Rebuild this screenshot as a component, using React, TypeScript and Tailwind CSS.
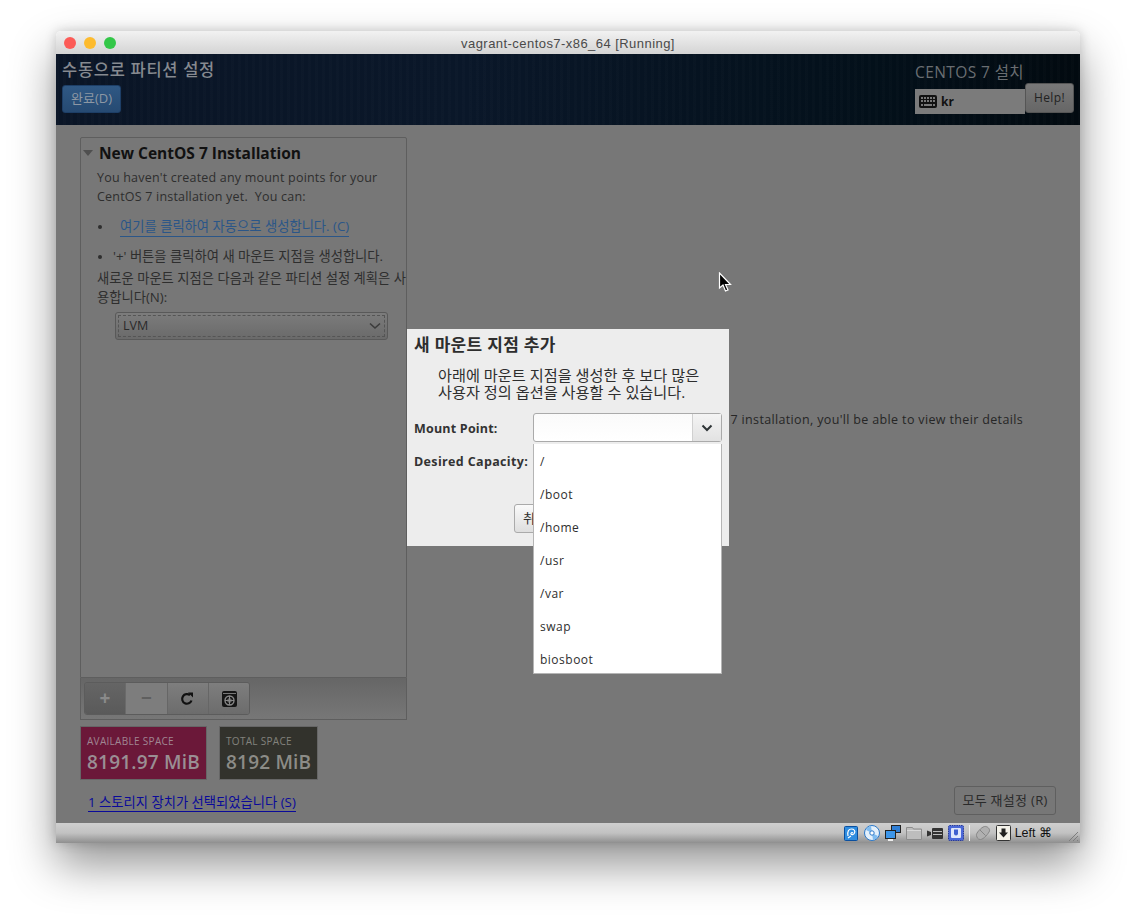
function Dot({ className }: { className: string }) {
  return <span className={`block h-3 w-3 rounded-full ${className}`} />;
}

function KeyboardIcon() {
  return (
    <svg width="18" height="13" viewBox="0 0 18 13">
      <rect x="0" y="0" width="18" height="13" rx="2" fill="#111" />
      <g fill="#777">
        <rect x="2" y="2" width="2" height="2" />
        <rect x="5" y="2" width="2" height="2" />
        <rect x="8" y="2" width="2" height="2" />
        <rect x="11" y="2" width="2" height="2" />
        <rect x="14" y="2" width="2" height="2" />
        <rect x="2" y="5" width="2" height="2" />
        <rect x="5" y="5" width="2" height="2" />
        <rect x="8" y="5" width="2" height="2" />
        <rect x="11" y="5" width="2" height="2" />
        <rect x="14" y="5" width="2" height="2" />
        <rect x="2" y="9" width="2" height="2" />
        <rect x="5" y="9" width="8" height="2" />
        <rect x="14" y="9" width="2" height="2" />
      </g>
    </svg>
  );
}

function StatusIcons() {
  return (
    <div className="flex items-center">
      {/* hard disk */}
      <svg width="14" height="15" viewBox="0 0 14 15" className="mr-[6px]">
        <rect x="0.500" y="0.500" width="13" height="14" rx="1" fill="#2f8de0" stroke="#0b4f9e" />
        <path d="M4 10c-1-5 1-7 3.500-7s4 2 3 4-3 2-3.500 1 1-2 2-1M4 12l3-2" fill="none" stroke="#fff" strokeWidth="1.200" />
      </svg>
      {/* optical disk */}
      <svg width="16" height="16" viewBox="0 0 16 16" className="mr-[5px]">
        <circle cx="8" cy="8" r="7.500" fill="#e4f0fb" stroke="#2b78c9" />
        <path d="M8 8 2 5a7 7 0 0 1 5-4zM8 8l6 3a7 7 0 0 1-5 4z" fill="#7fbcf0" />
        <circle cx="8" cy="8" r="2.200" fill="#fff" stroke="#2b78c9" />
      </svg>
      {/* network */}
      <svg width="16" height="16" viewBox="0 0 16 16" className="mr-[5px]">
        <rect x="6.500" y="0.500" width="9" height="7" fill="#2f7fd6" stroke="#222" />
        <rect x="0.500" y="5.500" width="10" height="8" fill="#3d96ea" stroke="#222" />
        <rect x="3" y="14" width="5" height="2" fill="#eee" />
      </svg>
      {/* shared folder */}
      <svg width="16" height="14" viewBox="0 0 16 14" className="mr-[5px]">
        <path d="M.5 13.500V1.500h6l1 1.500h8v10.500z" fill="#bdbdbd" stroke="#8d8d8d" />
        <path d="M1 4.500h14" stroke="#d8d8d8" />
      </svg>
      {/* capture */}
      <svg width="16" height="11" viewBox="0 0 16 11" className="mr-[5px]">
        <rect x="5" y="0" width="11" height="11" rx="1" fill="#333" />
        <path d="M6 3.500h9M6 6.500h9" stroke="#bbb" />
        <path d="M0 2.500 4 4v3L0 8.500z" fill="#333" />
      </svg>
      {/* cpu */}
      <svg width="16" height="16" viewBox="0 0 16 16" className="mr-[5px]">
        <rect x="0.500" y="0.500" width="15" height="15" rx="1" fill="#4a68d8" stroke="#26389a" strokeDasharray="1.500 0.800" />
        <rect x="3" y="3" width="10" height="10" rx="1" fill="#dfe6fb" />
        <path d="M6 4.500v4a2 2 0 0 0 4 0v-4z" fill="#3f5fd0" />
      </svg>
      <span className="mr-[5px] h-[16px] w-px bg-[#f2f2f2]" />
      {/* mouse */}
      <svg width="16" height="16" viewBox="0 0 16 16" className="mr-[5px]">
        <path d="M1.500 10.500c-1-2 5-8.500 8-9s5.500 2.500 5 4.500-6 8.500-9 8.500-3.500-2-4-4z" fill="#b0b0b0" stroke="#858585" />
        <path d="M5 5l5.500 5.500" stroke="#858585" />
      </svg>
      {/* host key capture */}
      <svg width="15" height="16" viewBox="0 0 15 16" className="mr-[4px]">
        <rect x="0.500" y="0.500" width="14" height="15" rx="1" fill="#f4f2ea" stroke="#333" />
        <path d="M5.500 3.500h4v4h2.500l-4.500 5-4.500-5h2.500z" fill="#222" />
      </svg>
    </div>
  );
}

export default function App() {
  const mountPoints = ["/", "/boot", "/home", "/usr", "/var", "swap", "biosboot"];

  return (
    <div className="h-[923px] w-[1136px] overflow-hidden bg-white pl-[56px] pt-[31px] font-['Open_Sans','Noto_Sans_CJK_KR',sans-serif]">
      <div className="relative flex h-[812px] w-[1024px] flex-col overflow-hidden rounded-t-[5px] shadow-[0_22px_45px_rgba(0,0,0,0.42),0_0_12px_rgba(0,0,0,0.18)]">
        {/* title bar */}
        <div className="relative flex h-[23px] shrink-0 items-center justify-center bg-gradient-to-b from-[#f2f2f2] to-[#d4d4d4] pt-[2px] font-['Liberation_Sans',sans-serif] text-[13px] tracking-[0.45px] text-[#4a4a4a]">
          <div className="absolute left-[8px] top-[6px] flex gap-2">
            <Dot className="bg-[#fc5b57]" />
            <Dot className="bg-[#fdbb2e]" />
            <Dot className="bg-[#33c748]" />
          </div>
          vagrant-centos7-x86_64 [Running]
        </div>

        {/* installer header */}
        <div className="flex h-[71px] shrink-0 justify-between bg-[repeating-linear-gradient(90deg,rgba(255,255,255,0.012)_0px,rgba(255,255,255,0.012)_3px,transparent_3px,transparent_7px),linear-gradient(90deg,#0a1526_0%,#0a1729_40%,#03101a_80%,#020a10_100%)] pl-[6px] pr-[6px]">
          <div>
            <div className="mt-[5px] text-[16.5px] font-medium leading-[22px] tracking-[0.7px] text-[#868a90]">수동으로 파티션 설정</div>
            <button className="mt-[4px] flex h-[28px] w-[59px] items-center justify-center rounded-[3px] border border-[#1d3e66] bg-gradient-to-b from-[#2f5884] to-[#264a72] text-[13px] text-[#8d98a4]">
              완료(D)
            </button>
          </div>
          <div className="w-[159px]">
            <div className="mt-[8px] text-[15.5px] leading-[20px] tracking-[0.4px] text-[#6a6e72]">CENTOS 7 설치</div>
            <div className="mt-[1px] flex items-start">
              <div className="mt-[6px] flex h-[25px] w-[110px] items-center gap-[4px] bg-[#7b7b7b] pl-[4px] text-[12px] font-bold text-[#111]">
                <KeyboardIcon />
                kr
              </div>
              <button className="h-[30px] w-[49px] rounded-[3px] border border-[#555] bg-gradient-to-b from-[#787878] to-[#666] text-[12px] tracking-[0.4px] text-[#222]">
                Help!
              </button>
            </div>
          </div>
        </div>

        {/* main content */}
        <div className="flex min-h-0 flex-1 bg-[#777777] pl-[24px] pr-[24px]">
          <div className="flex w-[327px] shrink-0 flex-col pt-[12px]">
            <div className="flex h-[541px] flex-col rounded-t-[2px] border border-[#5e5e5e]">
              <div className="mt-[5px] flex items-center pl-[2px]">
                <span className="mr-[6px] h-0 w-0 border-x-[5px] border-t-[6px] border-x-transparent border-t-[#4f4f4f]" />
                <span className="text-[15.5px] font-bold leading-[20px] text-[#111]">New CentOS 7 Installation</span>
              </div>
              <div className="mt-[5px] pl-[16px] text-[12.5px] leading-[19px] tracking-[0.2px] text-[#2e2e2e]">
                <p className="whitespace-pre">You haven't created any mount points for your</p>
                <p className="whitespace-pre">CentOS 7 installation yet.  You can:</p>
              </div>
              <div className="mt-[11px] flex items-center pl-[17px] text-[13.3px] leading-[19px]">
                <span className="mr-[18px] block h-[4px] w-[4px] rounded-full bg-[#2e2e2e]" />
                <span className="border-b border-[#2b5688] text-[#2b5688]">여기를 클릭하여 자동으로 생성합니다. (C)</span>
              </div>
              <div className="mt-[10px] flex items-center pl-[17px] text-[13.3px] leading-[19px] text-[#2e2e2e]">
                <span className="mr-[11px] block h-[4px] w-[4px] rounded-full bg-[#2e2e2e]" />
                <span className="whitespace-nowrap">'+' 버튼을 클릭하여 새 마운트 지점을 생성합니다.</span>
              </div>
              <p className="mt-[3px] whitespace-nowrap pl-[16px] text-[13.3px] leading-[19px] text-[#2e2e2e]">
                새로운 마운트 지점은 다음과 같은 파티션 설정 계획은 사
                <br />
                용합니다(N):
              </p>
              <div className="ml-[34px] mt-[5px] flex h-[28px] w-[273px] items-center justify-between rounded-[3px] border border-[#595959] bg-gradient-to-b from-[#7c7c7c] to-[#6a6a6a] p-[2px]">
                <div className="flex h-full w-full items-center justify-between border border-dashed border-[#555] pl-[4px] pr-[3px] text-[12.5px] text-[#2a2a2a]">
                  LVM
                  <svg width="12" height="8" viewBox="0 0 12 8">
                    <path d="M1 1.500 6 6l5-4.500" fill="none" stroke="#3c3c3c" strokeWidth="1.600" />
                  </svg>
                </div>
              </div>
            </div>

            {/* mount point toolbar */}
            <div className="flex h-[42px] shrink-0 items-start border border-t-0 border-[#5e5e5e] bg-gradient-to-b from-[#666666] to-[#777777] pl-[3px] pt-[4px]">
              <div className="flex h-[33px] overflow-hidden rounded-[3px] border border-[#5c5c5c]">
                <div className="flex w-[40px] items-center justify-center bg-gradient-to-b from-[#656565] to-[#5a5a5a] text-[19px] font-bold leading-none text-[#8a8a8a]">+</div>
                <div className="flex w-[42px] items-center justify-center border-l border-[#6a6a6a] bg-[#7d7d7d] text-[19px] font-bold leading-none text-[#5f5f5f]">−</div>
                <div className="flex w-[41px] items-center justify-center border-l border-[#666] bg-gradient-to-b from-[#7e7e7e] to-[#6c6c6c]">
                  <svg width="14" height="14" viewBox="0 0 14 14" className="-ml-[2px]">
                    <path d="M11.500 8.500A4.800 4.800 0 1 1 10 3.200" fill="none" stroke="#111" strokeWidth="2.200" />
                    <path d="M8 0.500h5v5z" fill="#111" />
                  </svg>
                </div>
                <div className="flex w-[41px] items-center justify-center border-l border-[#666] bg-gradient-to-b from-[#7e7e7e] to-[#6c6c6c]">
                  <svg width="15" height="16" viewBox="0 0 15 16">
                    <rect x="0" y="0" width="15" height="16" rx="2" fill="#151515" />
                    <path d="M1 2.500h13" stroke="#777" />
                    <circle cx="7.500" cy="9.500" r="4.500" fill="none" stroke="#888" strokeWidth="1.400" />
                    <circle cx="7.500" cy="9.500" r="1.800" fill="none" stroke="#888" />
                    <path d="M7.500 5v9M3 9.500h9" stroke="#888" />
                  </svg>
                </div>
              </div>
            </div>

            {/* space tiles */}
            <div className="mt-[6px] flex gap-[12px]">
              <div className="h-[54px] w-[127px] border border-[#666] bg-[#6b1839] pl-[6px] pt-[7px]">
                <div className="text-[10px] leading-[14px] tracking-[0.3px] text-[#a08692]">AVAILABLE SPACE</div>
                <div className="mt-[2px] whitespace-nowrap text-[19px] font-semibold leading-[24px] tracking-[0.2px] text-[#9a8f94]">8191.97 MiB</div>
              </div>
              <div className="h-[54px] w-[99px] border border-[#666] bg-[#32322c] pl-[6px] pt-[7px]">
                <div className="text-[10px] leading-[14px] tracking-[0.3px] text-[#82827c]">TOTAL SPACE</div>
                <div className="mt-[2px] whitespace-nowrap text-[19px] font-semibold leading-[24px] tracking-[0.2px] text-[#8c8c87]">8192 MiB</div>
              </div>
            </div>

            <div className="ml-[8px] mt-[9px]">
              <span className="border-b border-[#0a0a9a] text-[13.3px] leading-[18px] text-[#0a0a9a]">1 스토리지 장치가 선택되었습니다 (S)</span>
            </div>
          </div>

          {/* right side */}
          <div className="flex min-w-0 flex-1 flex-col items-end">
            <p className="mr-[33px] mt-[286px] whitespace-nowrap text-[12.5px] leading-[18px] tracking-[0.35px] text-[#262626]">
              7 installation, you'll be able to view their details
            </p>
            <button className="mb-[8px] mt-auto flex h-[29px] w-[102px] items-center justify-center rounded-[3px] border border-[#5f5f5f] text-[13px] tracking-[0.3px] text-[#2a2a2a]">
              모두 재설정 (R)
            </button>
          </div>
        </div>

        {/* virtualbox status bar */}
        <div className="relative flex h-[20px] shrink-0 items-center justify-end bg-gradient-to-b from-[#cfcfcf] via-[#c2c2c2] to-[#8f8f8f] pr-[28px] font-['Liberation_Sans',sans-serif] text-[12.5px] text-[#111]">
          <StatusIcons />
          Left ⌘
          <svg width="11" height="11" viewBox="0 0 11 11" className="absolute bottom-[1px] right-[1px]">
            <path d="M1 10 10 1M5 10l5-5M9 10l1-1" stroke="#7d7d7d" />
          </svg>
        </div>

        {/* add mount point dialog */}
        <div className="absolute left-[351px] top-[298px] h-[217px] w-[322px] bg-[#ededed] text-[#2e2e2e]">
          <div className="pl-[7px] pt-[5px] text-[17px] font-bold leading-[22px] tracking-[0.3px]">새 마운트 지점 추가</div>
          <div className="ml-[31px] mt-[11px] whitespace-nowrap text-[15.2px] leading-[17px]">
            <p>아래에 마운트 지점을 생성한 후 보다 많은</p>
            <p>사용자 정의 옵션을 사용할 수 있습니다.</p>
          </div>
          <div className="mt-[12px] flex items-center pl-[7px]">
            <span className="mt-[3px] w-[119px] text-[12.5px] font-bold tracking-[0.2px] text-[#333]">Mount Point:</span>
            <div className="flex h-[29px] w-[189px] rounded-[3px] border border-[#aaaaaa] bg-gradient-to-b from-[#fafafa] to-[#ffffff]">
              <div className="flex-1" />
              <div className="flex w-[29px] items-center justify-center border-l border-[#d0d0d0] bg-gradient-to-b from-[#f4f4f4] to-[#e2e2e2]">
                <svg width="12" height="8" viewBox="0 0 12 8">
                  <path d="M1.500 1.500 6 6l4.500-4.500" fill="none" stroke="#2e3436" strokeWidth="2" />
                </svg>
              </div>
            </div>
          </div>
          <div className="mt-[11px] pl-[7px] text-[12.5px] font-bold leading-[18px] tracking-[0.35px] text-[#333]">Desired Capacity:</div>
          <button className="absolute left-[107px] top-[175px] h-[29px] w-[60px] rounded-[3px] border border-[#aaa] bg-gradient-to-b from-[#fafafa] to-[#dedede] pl-[8px] text-left text-[13px]">
            취
          </button>

          {/* open dropdown */}
          <ul className="absolute left-[126px] top-[115px] h-[230px] w-[189px] overflow-hidden border border-t-0 border-[#b5b5b5] bg-white text-[12px] tracking-[0.5px] text-[#2e2e2e]">
            {mountPoints.map((m) => (
              <li key={m} className="flex h-[33px] items-center pl-[6px] pt-[2px]">
                {m}
              </li>
            ))}
          </ul>
        </div>

        {/* pointer */}
        <svg width="15" height="21" viewBox="0 0 15 21" className="absolute left-[662px] top-[241px]">
          <path d="M1.500 1v15l3.500-3 2.500 6 2.500-1-2.500-5.500h5z" fill="#000" stroke="#fff" strokeWidth="1.200" />
        </svg>
      </div>
    </div>
  );
}
